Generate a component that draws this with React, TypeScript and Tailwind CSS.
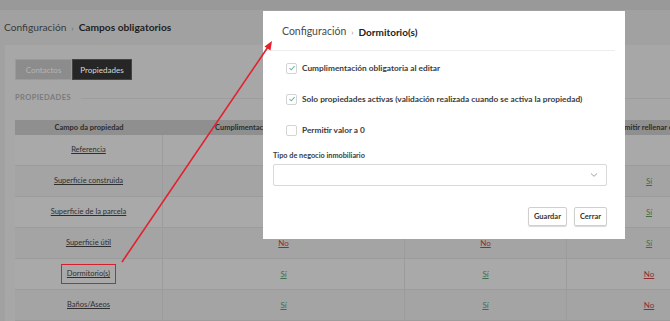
import clsx from 'clsx';

type Val = 'Sí' | 'No' | '';

const rows: { name: string; vals: [Val, Val, Val]; boxed?: boolean }[] = [
  { name: 'Referencia', vals: ['', '', ''] },
  { name: 'Superficie construida', vals: ['', '', 'Sí'] },
  { name: 'Superficie de la parcela', vals: ['', '', 'Sí'] },
  { name: 'Superficie útil', vals: ['No', 'No', 'Sí'] },
  { name: 'Dormitorio(s)', vals: ['Sí', 'Sí', 'No'], boxed: true },
  { name: 'Baños/Aseos', vals: ['Sí', 'Sí', 'No'] },
];

function ValueLink(props: { v: Val }) {
  const { v } = props;
  if (!v) return null;
  return (
    <span className={clsx('underline text-[8px]', v === 'Sí' ? 'text-[#3f6e48]' : 'text-[#8c2f35]')}>{v}</span>
  );
}

function Check(props: { label: string; checked?: boolean }) {
  const { label, checked } = props;
  return (
    <div className="flex h-[12px] items-center gap-[5px]">
      <div className="flex h-[11px] w-[11px] items-center justify-center rounded-[2px] border border-[#d4d4d4] bg-white">
        {checked && (
          <svg width="8" height="8" viewBox="0 0 8 8">
            <path d="M1.5 4.2 L3.3 5.8 L6.6 2.2" fill="none" stroke="#6fb7a8" strokeWidth="1.1" />
          </svg>
        )}
      </div>
      <span className="text-[8.3px] font-bold text-[#3b3b3b]">{label}</span>
    </div>
  );
}

function Modal() {
  return (
    <div className="absolute left-[263px] top-[11px] h-[228px] w-[362px] bg-white">
      <div className="flex h-[39px] items-center pl-[19px] pt-[3px] text-[10.5px] text-[#4a4a4a]">
        <span>Configuración</span>
        <span className="mx-[5px] text-[8px] text-[#888]">›</span>
        <span className="text-[10px] font-bold text-[#222]">Dormitorio(s)</span>
      </div>
      <div className="mr-[10px] border-t border-[#eeeeee]" />
      <div className="flex flex-col gap-[19px] pl-[23px] pt-[11px]">
        <Check label="Cumplimentación obligatoria al editar" checked />
        <Check label="Solo propiedades activas (validación realizada cuando se activa la propiedad)" checked />
        <Check label="Permitir valor a 0" />
      </div>
      <div className="px-[10px] pt-[15px] pr-[18px]">
        <div className="h-[10px] text-[7.3px] leading-[10px] font-bold text-[#3b3b3b]">Tipo de negocio inmobiliario</div>
        <div className="mt-[3px] flex h-[22px] items-center justify-end rounded-[2px] border border-[#d9d9d9] pr-[8px]">
          <svg width="8" height="6" viewBox="0 0 8 6">
            <path d="M1 1.5 L4 4.3 L7 1.5" fill="none" stroke="#999" strokeWidth="0.9" />
          </svg>
        </div>
        <div className="mt-[21px] flex justify-end gap-[7px]">
          <button className="h-[19px] rounded-[2px] border border-[#cfcfcf] px-[5px] text-[7.5px] font-bold text-[#333] shadow-[0_1px_1px_rgba(0,0,0,0.15)]">Guardar</button>
          <button className="h-[19px] rounded-[2px] border border-[#cfcfcf] px-[5px] text-[7.5px] font-bold text-[#333] shadow-[0_1px_1px_rgba(0,0,0,0.15)]">Cerrar</button>
        </div>
      </div>
    </div>
  );
}

export default function App() {
  return (
    <div className="relative h-[321px] w-[670px] overflow-hidden bg-[#a1a1a1] font-['Lato','Liberation_Sans',sans-serif]">
      <div className="h-[10px] bg-[#999999]" />
      <div className="flex h-[35px] items-center pl-[4px] text-[10.2px] text-[#3a3a3a]">
        <span>Configuración</span>
        <span className="mx-[5px] text-[8px] text-[#666]">›</span>
        <span className="font-bold text-[#1e1e1e]">Campos obligatorios</span>
      </div>
      <div className="ml-[5px] h-full bg-[#a7a7a7] pl-[10px] pt-[14px]">
        <div className="flex">
          <div className="flex h-[21px] w-[57px] items-center justify-center border border-[#9a9a9a] bg-[#8c8c8c] text-[8px] text-[#b4b4b4]">Contactos</div>
          <div className="flex h-[21px] w-[60px] items-center justify-center border border-[#444] bg-[#262626] text-[8px] text-[#d8d8d8]">Propiedades</div>
        </div>
        <div className="mt-[12px] flex h-[12px] items-center gap-[10px]">
          <span className="text-[7.5px] font-bold tracking-[0.4px] text-[#7b7b7b]">PROPIEDADES</span>
          <div className="flex-1 border-t border-[#9d9d9d]" />
        </div>
        <div className="mt-[16px] w-[716px] text-[7.5px] text-[#333]">
          <div className="grid h-[15px] grid-cols-[148px_242px_162px_164px] items-center bg-[#8f8f8f] font-bold text-[#2c2c2c]">
            <div className="text-center">Campo da propiedad</div>
            <div className="pl-[52px]">Cumplimentación obligatoria al editar</div>
            <div />
            <div className="pl-[46px]">Permitir rellenar con 0</div>
          </div>
          {rows.map((r, i) => (
            <div
              key={r.name}
              className={clsx(
                'grid h-[31px] grid-cols-[148px_242px_162px_164px] items-center border-b border-[#9c9c9c]',
                i % 2 === 0 ? 'bg-[#a9a9a9]' : 'bg-[#a4a4a4]',
              )}
            >
              <div className="flex h-full items-center justify-center border-r border-[#9c9c9c]">
                <span className={clsx('underline text-[#2f2f2f]', r.boxed && 'px-[5px] py-[3px] outline outline-[1.5px] outline-[#d61f2c]')}>{r.name}</span>
              </div>
              <div className="flex h-full items-center justify-center border-r border-[#9c9c9c]"><ValueLink v={r.vals[0]} /></div>
              <div className="flex h-full items-center justify-center border-r border-[#9c9c9c]"><ValueLink v={r.vals[1]} /></div>
              <div className="flex h-full items-center justify-center"><ValueLink v={r.vals[2]} /></div>
            </div>
          ))}
        </div>
      </div>
      <Modal />
      <svg className="pointer-events-none absolute left-0 top-0" width="670" height="321">
        <line x1="122" y1="262" x2="268" y2="47" stroke="#e3202e" strokeWidth="1.6" />
        <path d="M272 41 L264.5 46.5 L270.5 50.5 Z" fill="#e3202e" />
      </svg>
    </div>
  );
}
